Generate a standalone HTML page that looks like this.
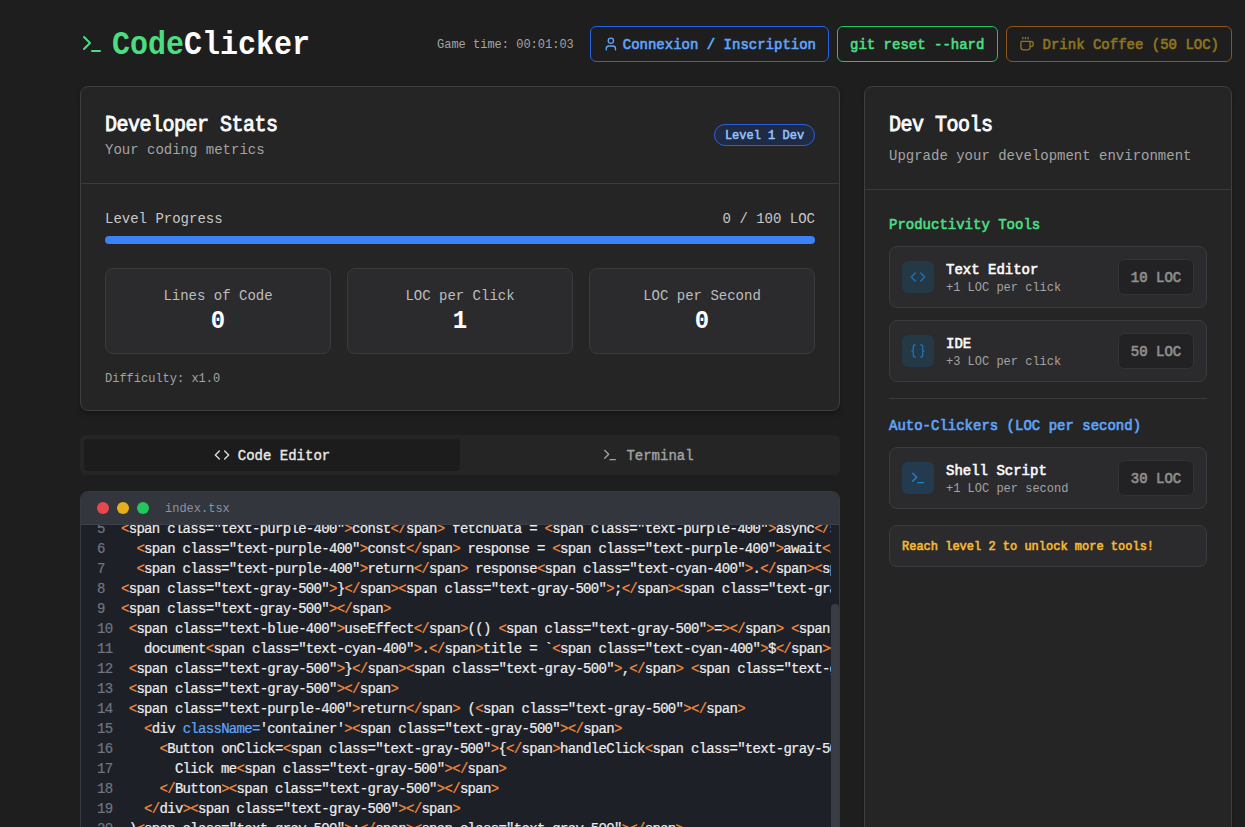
<!DOCTYPE html>
<html><head><meta charset="utf-8">
<style>
*{box-sizing:border-box;margin:0;padding:0}
html,body{width:1245px;height:827px;overflow:hidden;background:#1e1e1e;font-family:"Liberation Mono",monospace;color:#f2f2f2}
.abs{position:absolute}
svg{display:block}
.card{position:absolute;background:#252526;border:1px solid #3d3d42;border-radius:8px;box-shadow:0 4px 6px -1px rgba(0,0,0,.2),0 2px 4px -2px rgba(0,0,0,.2)}
.t{transform:translateY(.06em) scaleY(1.1);transform-origin:50% calc(50% + .266em)} span.t{display:inline-block}
/* header */
#logo{left:80px;top:26px;height:36px;display:flex;align-items:center}
#logo .name{font-size:30px;font-weight:bold;line-height:36px;margin-left:8px}
#gt{left:437px;top:36px;font-size:12px;line-height:16px;color:#a3a3a3}
.btn{position:absolute;top:26px;height:36px;border:1px solid;border-radius:6px;display:flex;align-items:center;padding:0 12px;font-size:14px;font-weight:bold;line-height:20px;white-space:pre}
.stat{position:absolute;top:181px;width:226px;height:86px;background:#2b2b2e;border:1px solid #3b3b3f;border-radius:8px;text-align:center;padding-top:16px}
.stat .lab{font-size:14px;line-height:20px;color:#bdbdbd}
.stat .val{font-size:24px;line-height:32px;font-weight:bold;color:#fff}
.dot{top:10px;width:12px;height:12px;border-radius:6px}
.code{font-size:14px;letter-spacing:-0.7px;line-height:20px;white-space:pre;color:#ededed;width:750px;-webkit-text-stroke:0.2px currentColor}
.ln{height:20px}
.num{display:inline-block;width:40px;padding-left:16px;text-align:left;color:#6e7681}
.code i{font-style:normal;color:#f28b3a}
.code b{font-weight:normal;color:#60a5fa}
.item{position:absolute;left:24px;width:318px;height:62px;background:#2b2b2e;border:1px solid #3b3b3f;border-radius:8px}
.ibox{position:absolute;left:12px;top:14px;width:32px;height:32px;border-radius:6px;background:#253845;display:flex;align-items:center;justify-content:center}
.price{position:absolute;right:12px;top:12px;width:76px;height:36px;border:1px solid #333336;background:#222224;border-radius:6px;font-size:14px;line-height:20px;font-weight:bold;color:#8f8f8f;display:flex;align-items:center;justify-content:center}
.med{font-weight:normal !important;-webkit-text-stroke:0.35px currentColor}
.semi{font-weight:normal !important;-webkit-text-stroke:0.6px currentColor}
.semi2{font-weight:normal !important;-webkit-text-stroke:0.8px currentColor}
</style></head><body>

<!-- header -->
<div id="logo" class="abs">
  <svg width="24" height="24" viewBox="0 0 24 24" fill="none" stroke="#4ade80" stroke-width="2" stroke-linecap="round" stroke-linejoin="round"><polyline points="4 17 10 11 4 5"/><line x1="12" y1="19" x2="20" y2="19"/></svg>
  <span class="name t"><span style="color:#4ade80">Code</span><span style="color:#fff">Clicker</span></span>
</div>
<div id="gt" class="abs t">Game time: 00:01:03</div>
<div class="btn" style="left:590px;width:239px;border-color:#2563eb;color:#60a5fa">
  <svg width="16" height="16" viewBox="0 0 24 24" fill="none" stroke="#60a5fa" stroke-width="2" stroke-linecap="round" stroke-linejoin="round"><path d="M19 21v-2a4 4 0 0 0-4-4H9a4 4 0 0 0-4 4v2"/><circle cx="12" cy="7" r="4"/></svg>
  <span class="t semi" style="margin-left:4px">Connexion / Inscription</span>
</div>
<div class="btn" style="left:837px;width:161px;border-color:#22c55e;color:#4ade80">
  <span class="t semi">git reset --hard</span>
</div>
<div class="btn" style="left:1006px;width:226px;border-color:#8d5618;color:#8f7422">
  <svg width="16" height="16" viewBox="0 0 24 24" fill="none" stroke="#8f7422" stroke-width="2" stroke-linecap="round" stroke-linejoin="round"><path d="M10 2v2"/><path d="M14 2v2"/><path d="M16 8a1 1 0 0 1 1 1v8a4 4 0 0 1-4 4H7a4 4 0 0 1-4-4V9a1 1 0 0 1 1-1h14a4 4 0 1 1 0 8h-1"/><path d="M6 2v2"/></svg>
  <span class="t semi" style="margin-left:8px">Drink Coffee (50 LOC)</span>
</div>

<!-- STATS CARD -->
<div class="card" style="left:80px;top:86px;width:760px;height:325px">
  <div style="position:absolute;left:0;top:0;width:758px;height:97px;border-bottom:1px solid #3b3b3f">
    <div class="abs t semi2" style="left:24px;top:24px;font-size:20px;line-height:28px;font-weight:bold;letter-spacing:-0.5px;color:#fafafa">Developer Stats</div>
    <div class="abs t" style="left:24px;top:52px;font-size:14px;line-height:20px;color:#a3a3a3">Your coding metrics</div>
    <div class="abs" style="left:633px;top:37px;width:101px;height:22px;border:1px solid #2c5fd8;border-radius:11px;background:#1f2a44;font-size:12px;line-height:20px;font-weight:bold;color:#93c5fd;text-align:center"><span class="t semi" style="-webkit-text-stroke-width:0.5px">Level 1 Dev</span></div>
  </div>
  <div class="abs t" style="left:24px;top:121px;font-size:14px;line-height:20px;color:#c8c8c8">Level Progress</div>
  <div class="abs t" style="right:24px;top:121px;font-size:14px;line-height:20px;color:#c8c8c8">0 / 100 LOC</div>
  <div class="abs" style="left:24px;top:149px;width:710px;height:8px;border-radius:4px;background:#3b82f6"></div>
  <div class="stat" style="left:24px"><div class="lab t">Lines of Code</div><div class="val t">0</div></div>
  <div class="stat" style="left:266px"><div class="lab t">LOC per Click</div><div class="val t">1</div></div>
  <div class="stat" style="left:508px"><div class="lab t">LOC per Second</div><div class="val t">0</div></div>
  <div class="abs t" style="left:24px;top:283px;font-size:12px;line-height:16px;color:#a3a3a3">Difficulty: x1.0</div>
</div>


<!-- TABS -->
<div class="abs" style="left:80px;top:435px;width:760px;height:40px;background:#252525;border-radius:6px">
  <div class="abs" style="left:4px;top:4px;width:376px;height:32px;background:#1c1c1c;border-radius:4px;display:flex;align-items:center;justify-content:center;color:#e8e8e8;font-size:14px;font-weight:bold">
    <svg width="16" height="16" viewBox="0 0 24 24" fill="none" stroke="#e0e0e0" stroke-width="2" stroke-linecap="round" stroke-linejoin="round"><polyline points="16 18 22 12 16 6"/><polyline points="8 6 2 12 8 18"/></svg>
    <span class="t med" style="margin-left:8px">Code Editor</span>
  </div>
  <div class="abs" style="left:380px;top:4px;width:376px;height:32px;display:flex;align-items:center;justify-content:center;color:#a3a3a3;font-size:14px;font-weight:bold">
    <svg width="16" height="16" viewBox="0 0 24 24" fill="none" stroke="#a3a3a3" stroke-width="2" stroke-linecap="round" stroke-linejoin="round"><polyline points="4 17 10 11 4 5"/><line x1="12" y1="19" x2="20" y2="19"/></svg>
    <span class="t med" style="margin-left:8px">Terminal</span>
  </div>
</div>

<!-- EDITOR -->
<div class="abs" style="left:80px;top:491px;width:760px;height:360px;background:#1e2028;border:1px solid #383a42;border-radius:8px 8px 0 0;overflow:hidden">
  <div class="abs" style="left:0;top:0;width:758px;height:33px;background:#33363d;border-bottom:1px solid #3d4048">
    <div class="abs dot" style="left:16px;background:#e5484d"></div>
    <div class="abs dot" style="left:36px;background:#e4b01c"></div>
    <div class="abs dot" style="left:56px;background:#22c55e"></div>
    <div class="abs t" style="left:84px;top:8px;font-size:12px;line-height:16px;color:#8b93a3">index.tsx</div>
  </div>
  <div class="abs" style="left:0;top:33px;width:750px;height:330px;overflow:hidden">
    <div class="abs code" style="left:0;top:-6.2px"><div class="ln"><span class="num">5</span><i>&lt;</i>span class="text-purple-400"<i>&gt;</i>const<i>&lt;/</i>span<i>&gt;</i> fetchData = <i>&lt;</i>span class="text-purple-400"<i>&gt;</i>async<i>&lt;/</i>span<i>&gt;</i> () <i>&lt;</i>span class="text-gray-500"<i>&gt;</i>=<i>&gt;</i><i>&lt;/</i>span<i>&gt;</i> <i>&lt;</i>span class="text-gray-500"<i>&gt;</i>{<i>&lt;/</i>span<i>&gt;</i></div><div class="ln"><span class="num">6</span>  <i>&lt;</i>span class="text-purple-400"<i>&gt;</i>const<i>&lt;/</i>span<i>&gt;</i> response = <i>&lt;</i>span class="text-purple-400"<i>&gt;</i>await<i>&lt;/</i>span<i>&gt;</i> fetch(<i>&lt;</i>span class="text-green-400"<i>&gt;</i>'/api/data'<i>&lt;/</i>span<i>&gt;</i>)</div><div class="ln"><span class="num">7</span>  <i>&lt;</i>span class="text-purple-400"<i>&gt;</i>return<i>&lt;/</i>span<i>&gt;</i> response<i>&lt;</i>span class="text-cyan-400"<i>&gt;</i>.<i>&lt;/</i>span<i>&gt;</i><i>&lt;</i>span class="text-blue-400"<i>&gt;</i>json<i>&lt;/</i>span<i>&gt;</i>()</div><div class="ln"><span class="num">8</span><i>&lt;</i>span class="text-gray-500"<i>&gt;</i>}<i>&lt;/</i>span<i>&gt;</i><i>&lt;</i>span class="text-gray-500"<i>&gt;</i>;<i>&lt;/</i>span<i>&gt;</i><i>&lt;</i>span class="text-gray-500"<i>&gt;</i><i>&lt;/</i>span<i>&gt;</i></div><div class="ln"><span class="num">9</span><i>&lt;</i>span class="text-gray-500"<i>&gt;</i><i>&lt;/</i>span<i>&gt;</i></div><div class="ln"><span class="num">10</span> <i>&lt;</i>span class="text-blue-400"<i>&gt;</i>useEffect<i>&lt;/</i>span<i>&gt;</i>(() <i>&lt;</i>span class="text-gray-500"<i>&gt;</i>=<i>&gt;</i><i>&lt;/</i>span<i>&gt;</i> <i>&lt;</i>span class="text-gray-500"<i>&gt;</i>{<i>&lt;/</i>span<i>&gt;</i></div><div class="ln"><span class="num">11</span>   document<i>&lt;</i>span class="text-cyan-400"<i>&gt;</i>.<i>&lt;/</i>span<i>&gt;</i>title = `<i>&lt;</i>span class="text-cyan-400"<i>&gt;</i>$<i>&lt;/</i>span<i>&gt;</i><i>&lt;</i>span class="text-gray-500"<i>&gt;</i>{<i>&lt;/</i>span<i>&gt;</i>count<i>&lt;</i>span class="text-gray-500"<i>&gt;</i>}<i>&lt;/</i>span<i>&gt;</i></div><div class="ln"><span class="num">12</span> <i>&lt;</i>span class="text-gray-500"<i>&gt;</i>}<i>&lt;/</i>span<i>&gt;</i><i>&lt;</i>span class="text-gray-500"<i>&gt;</i>,<i>&lt;/</i>span<i>&gt;</i> <i>&lt;</i>span class="text-gray-500"<i>&gt;</i>[<i>&lt;/</i>span<i>&gt;</i>count<i>&lt;</i>span class="text-gray-500"<i>&gt;</i>]<i>&lt;/</i>span<i>&gt;</i></div><div class="ln"><span class="num">13</span> <i>&lt;</i>span class="text-gray-500"<i>&gt;</i><i>&lt;/</i>span<i>&gt;</i></div><div class="ln"><span class="num">14</span> <i>&lt;</i>span class="text-purple-400"<i>&gt;</i>return<i>&lt;/</i>span<i>&gt;</i> (<i>&lt;</i>span class="text-gray-500"<i>&gt;</i><i>&lt;/</i>span<i>&gt;</i></div><div class="ln"><span class="num">15</span>   <i>&lt;</i>div <b>className=</b>'container'<i>&gt;</i><i>&lt;</i>span class="text-gray-500"<i>&gt;</i><i>&lt;/</i>span<i>&gt;</i></div><div class="ln"><span class="num">16</span>     <i>&lt;</i>Button onClick=<i>&lt;</i>span class="text-gray-500"<i>&gt;</i>{<i>&lt;/</i>span<i>&gt;</i>handleClick<i>&lt;</i>span class="text-gray-500"<i>&gt;</i>}<i>&lt;/</i>span<i>&gt;</i><i>&gt;</i></div><div class="ln"><span class="num">17</span>       Click me<i>&lt;</i>span class="text-gray-500"<i>&gt;</i><i>&lt;/</i>span<i>&gt;</i></div><div class="ln"><span class="num">18</span>     <i>&lt;/</i>Button<i>&gt;</i><i>&lt;</i>span class="text-gray-500"<i>&gt;</i><i>&lt;/</i>span<i>&gt;</i></div><div class="ln"><span class="num">19</span>   <i>&lt;/</i>div<i>&gt;</i><i>&lt;</i>span class="text-gray-500"<i>&gt;</i><i>&lt;/</i>span<i>&gt;</i></div><div class="ln"><span class="num">20</span> )<i>&lt;</i>span class="text-gray-500"<i>&gt;</i>;<i>&lt;/</i>span<i>&gt;</i><i>&lt;</i>span class="text-gray-500"<i>&gt;</i><i>&lt;/</i>span<i>&gt;</i></div></div>
  </div>
    <div class="abs" style="left:750px;top:112px;width:8px;height:300px;background:#3a3c44;border-radius:4px"></div>
</div>

<!-- DEV TOOLS CARD -->
<div class="card" style="left:864px;top:86px;width:368px;height:760px">
  <div style="position:absolute;left:0;top:0;width:366px;height:103px;border-bottom:1px solid #3b3b3f">
    <div class="abs t semi2" style="left:24px;top:24px;font-size:20px;line-height:28px;font-weight:bold;letter-spacing:-0.5px;color:#fafafa">Dev Tools</div>
    <div class="abs t" style="left:24px;top:58px;font-size:14px;line-height:20px;color:#a3a3a3">Upgrade your development environment</div>
  </div>
  <div class="abs t semi" style="left:24px;top:127px;font-size:14px;line-height:20px;font-weight:bold;color:#4ade80">Productivity Tools</div>
  <div class="item" style="top:159px">
    <div class="ibox"><svg width="16" height="16" viewBox="0 0 24 24" fill="none" stroke="#1b70b9" stroke-width="2" stroke-linecap="round" stroke-linejoin="round"><polyline points="16 18 22 12 16 6"/><polyline points="8 6 2 12 8 18"/></svg></div>
    <div class="abs t semi" style="left:56px;top:12px;font-size:14px;line-height:20px;font-weight:bold;color:#fafafa">Text Editor</div>
    <div class="abs t" style="left:56px;top:32px;font-size:12px;line-height:16px;color:#a3a3a3">+1 LOC per click</div>
    <div class="price"><span class="t semi">10 LOC</span></div>
  </div>
  <div class="item" style="top:233px">
    <div class="ibox"><svg width="16" height="16" viewBox="0 0 24 24" fill="none" stroke="#1b70b9" stroke-width="2" stroke-linecap="round" stroke-linejoin="round"><path d="M8 3H7a2 2 0 0 0-2 2v5a2 2 0 0 1-2 2 2 2 0 0 1 2 2v5c0 1.1.9 2 2 2h1"/><path d="M16 21h1a2 2 0 0 0 2-2v-5c0-1.1.9-2 2-2a2 2 0 0 1-2-2V5a2 2 0 0 0-2-2h-1"/></svg></div>
    <div class="abs t semi" style="left:56px;top:12px;font-size:14px;line-height:20px;font-weight:bold;color:#fafafa">IDE</div>
    <div class="abs t" style="left:56px;top:32px;font-size:12px;line-height:16px;color:#a3a3a3">+3 LOC per click</div>
    <div class="price"><span class="t semi">50 LOC</span></div>
  </div>
  <div class="abs" style="left:24px;top:311px;width:318px;height:1px;background:#3b3b3f"></div>
  <div class="abs t semi" style="left:24px;top:328px;font-size:14px;line-height:20px;font-weight:bold;color:#60a5fa">Auto-Clickers (LOC per second)</div>
  <div class="item" style="top:360px">
    <div class="ibox" style="background:#243b4f"><svg width="16" height="16" viewBox="0 0 24 24" fill="none" stroke="#1a86d4" stroke-width="2" stroke-linecap="round" stroke-linejoin="round"><polyline points="4 17 10 11 4 5"/><line x1="12" y1="19" x2="20" y2="19"/></svg></div>
    <div class="abs t semi" style="left:56px;top:12px;font-size:14px;line-height:20px;font-weight:bold;color:#fafafa">Shell Script</div>
    <div class="abs t" style="left:56px;top:32px;font-size:12px;line-height:16px;color:#a3a3a3">+1 LOC per second</div>
    <div class="price"><span class="t semi">30 LOC</span></div>
  </div>
  <div class="abs" style="left:24px;top:438px;width:318px;height:42px;background:#2b2b2e;border:1px solid #3b3b3f;border-radius:8px">
    <div class="abs t semi" style="left:12px;top:12px;font-size:12px;line-height:16px;font-weight:bold;color:#f5b82e">Reach level 2 to unlock more tools!</div>
  </div>
</div>

</body></html>
